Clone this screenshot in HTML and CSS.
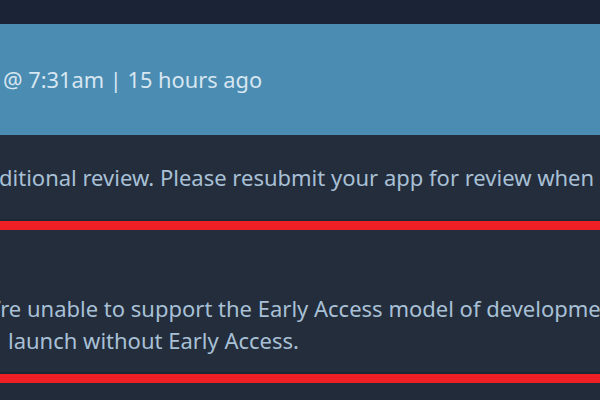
FILE: index.html
```html
<!DOCTYPE html>
<html lang="en">
<head>
<meta charset="utf-8">
<link rel="stylesheet" href="styles.css">
</head>
<body>
<div class="topbar"></div>
<div class="header">
  <span class="stamp">@ 7:31am | 15 hours ago</span>
</div>
<div class="section first">
  <p class="line l1">ditional review. Please resubmit your app for review when</p>
</div>
<div class="section second">
  <p class="line l2">’re unable to support the Early Access model of developme</p>
  <p class="line l3">launch without Early Access.</p>
</div>
<div class="bottom"></div>
</body>
</html>
```
FILE: styles.css
```css
html, body {
  margin: 0;
  padding: 0;
  width: 600px;
  height: 400px;
  overflow: hidden;
  background: #242d3c;
  font-family: "Noto Sans", "Open Sans", sans-serif;
}
.topbar {
  height: 24px;
  background: #1b2436;
}
.header {
  height: 111px;
  background: #4b8cb2;
  display: flex;
  align-items: center;
  padding-left: 3px;
}
.stamp {
  color: #d7e6f1;
  font-size: 21.8px;
  white-space: nowrap;
}
.section {
  background: #242d3c;
  border-bottom: 9px solid #ee2026;
  box-shadow: 0 -2px 0 #1d2835 inset;
  overflow: hidden;
}
.section.first {
  height: 60px;
  padding-top: 26px;
}
.section.second {
  height: 82px;
  padding-top: 62px;
}
.line {
  margin: 0;
  white-space: nowrap;
  color: #a8c0d6;
  font-size: 22px;
  line-height: 32px;
}
.l1 { margin-left: -1px; }
.l2 { margin-left: -3px; }
.l3 { margin-left: 8px; }
.bottom {
  height: 20px;
  background: #222b39;
}
```
